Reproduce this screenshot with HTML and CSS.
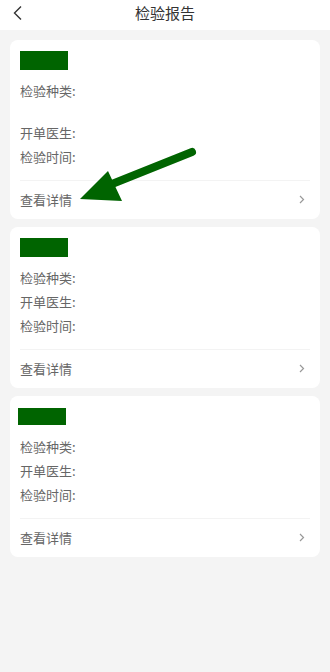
FILE: index.html
```html
<!DOCTYPE html>
<html lang="zh">
<head>
<meta charset="utf-8">
<link rel="stylesheet" href="styles.css">
</head>
<body>
<header class="topbar">
  <svg class="back" width="12" height="16" viewBox="0 0 12 16"><path d="M9 1.5 L2.5 8 L9 14.5" fill="none" stroke="#333" stroke-width="1.4"/></svg>
  <h1 class="title">检验报告</h1>
</header>
<main class="list">
  <section class="card">
    <div class="tag"></div>
    <div class="line">检验种类:</div>
    <div class="line blank"></div>
    <div class="line">开单医生:</div>
    <div class="line">检验时间:</div>
    <div class="detail">
      <span>查看详情</span>
      <svg class="chev" width="6" height="9" viewBox="0 0 6 9"><path d="M1 1 L4.5 4.5 L1 8" fill="none" stroke="#999" stroke-width="1.2"/></svg>
    </div>
    <svg class="pointer" width="130" height="62" viewBox="0 0 130 62">
      <path d="M120 12 L40 44" stroke="#006400" stroke-width="8" stroke-linecap="round" fill="none"/>
      <polygon points="8,59 36,31 50,61" fill="#006400"/>
    </svg>
  </section>
  <section class="card">
    <div class="tag"></div>
    <div class="line">检验种类:</div>
    <div class="line">开单医生:</div>
    <div class="line">检验时间:</div>
    <div class="detail">
      <span>查看详情</span>
      <svg class="chev" width="6" height="9" viewBox="0 0 6 9"><path d="M1 1 L4.5 4.5 L1 8" fill="none" stroke="#999" stroke-width="1.2"/></svg>
    </div>
  </section>
  <section class="card">
    <div class="tag tag-small"></div>
    <div class="line">检验种类:</div>
    <div class="line">开单医生:</div>
    <div class="line">检验时间:</div>
    <div class="detail">
      <span>查看详情</span>
      <svg class="chev" width="6" height="9" viewBox="0 0 6 9"><path d="M1 1 L4.5 4.5 L1 8" fill="none" stroke="#999" stroke-width="1.2"/></svg>
    </div>
  </section>
</main>
</body>
</html>
```
FILE: styles.css
```css
html, body {
  margin: 0;
  padding: 0;
}
body {
  background: #f4f4f4;
  font-family: "Noto Sans CJK SC", "Noto Sans", sans-serif;
  width: 330px;
  min-height: 672px;
}
.topbar {
  height: 30px;
  background: #fff;
  display: flex;
  align-items: center;
  justify-content: center;
  position: relative;
}
.back {
  position: absolute;
  left: 12px;
  top: 5px;
}
.title {
  margin: 0;
  font-size: 15px;
  font-weight: normal;
  color: #333;
  line-height: 26px;
  margin-top: -4px;
}
.list {
  padding: 10px 10px;
  display: flex;
  flex-direction: column;
  gap: 8px;
}
.card {
  background: #fff;
  border-radius: 8px;
  padding: 11px 10px 0 10px;
  position: relative;
}
.tag {
  width: 48px;
  height: 19px;
  background: #006400;
  margin-bottom: 9px;
}
.tag-small {
  width: 48px;
  height: 17px;
  margin-left: -2px;
  margin-top: 1px;
  margin-bottom: 10px;
}
.line {
  font-size: 13px;
  line-height: 24px;
  height: 24px;
  color: #666;
}
.line.blank {
  height: 18px;
}
.detail {
  margin-top: 11px;
  border-top: 1px solid #f3f3f3;
  height: 37px;
  display: flex;
  align-items: center;
  justify-content: space-between;
  font-size: 13px;
  color: #666;
  padding-right: 5px;
  padding-bottom: 1px;
}
.pointer {
  position: absolute;
  left: 62px;
  top: 100px;
}
```
